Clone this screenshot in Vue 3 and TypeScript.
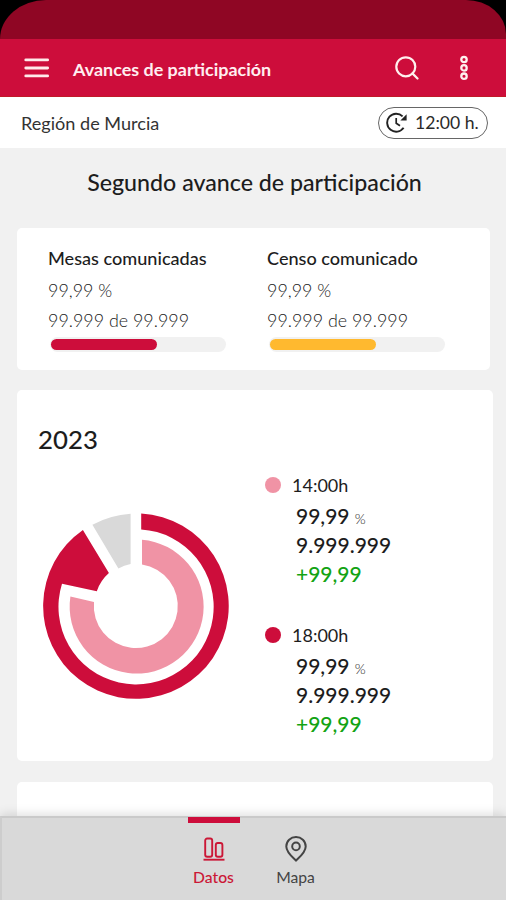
<script setup lang="ts">
interface Progress {
  title: string
  percent: string
  detail: string
  value: number
  tone: string
}

interface Turnout {
  hour: string
  percent: string
  votes: string
  delta: string
  tone: string
}

const progress: Progress[] = [
  { title: 'Mesas comunicadas', percent: '99,99 %', detail: '99.999 de 99.999', value: 61, tone: 'red' },
  { title: 'Censo comunicado', percent: '99,99 %', detail: '99.999 de 99.999', value: 61, tone: 'amber' },
]

const turnout: Turnout[] = [
  { hour: '14:00h', percent: '99,99', votes: '9.999.999', delta: '+99,99', tone: 'pink' },
  { hour: '18:00h', percent: '99,99', votes: '9.999.999', delta: '+99,99', tone: 'red' },
]
</script>

<template>
  <div class="screen">
    <div class="status"><div class="status-fill"></div></div>
    <header class="bar">
      <svg class="menu" width="26" height="20" viewBox="0 0 26 20">
        <path d="M1.8 1.9H23.6M1.8 10H23.6M1.8 17.9H23.6" stroke="#ffeaea" stroke-width="2.9" stroke-linecap="round" />
      </svg>
      <h1>Avances de participación</h1>
      <svg class="search" width="24" height="24" viewBox="0 0 24 24" fill="none" stroke="#fff0ee" stroke-width="2.2">
        <circle cx="10.8" cy="10.8" r="9.5" />
        <path d="M17.4 17.4L22.5 22.5" stroke-linecap="round" />
      </svg>
      <svg class="more" width="10" height="26" viewBox="0 0 10 26" fill="none" stroke="#fff0ee" stroke-width="2.3">
        <circle cx="5" cy="4.5" r="2.7" />
        <circle cx="5" cy="12.9" r="2.7" />
        <circle cx="5" cy="21.2" r="2.7" />
      </svg>
    </header>
    <div class="place">
      <span class="region">Región de Murcia</span>
      <div class="pill">
        <svg width="22" height="22" viewBox="0 0 22 22" fill="none" stroke="#222" stroke-width="1.9">
          <path d="M17.6 15.8A9 9 0 1 1 16.6 4.4" />
          <path d="M10.2 6V11.2L14 13.8" stroke-width="1.7" />
          <path d="M20.6 2.2V8.4H14.4Z" fill="#222" stroke="none" />
        </svg>
        <span>12:00 h.</span>
      </div>
    </div>
    <main>
      <h2>Segundo avance de participación</h2>
      <section class="card summary">
        <div v-for="p in progress" :key="p.title" class="item">
          <h3>{{ p.title }}</h3>
          <p>{{ p.percent }}</p>
          <p>{{ p.detail }}</p>
          <div class="track"><div class="fill" :class="p.tone" :style="{ width: p.value + '%' }"></div></div>
        </div>
      </section>
      <section class="card year">
        <h4>2023</h4>
        <div class="year-body">
          <svg class="donut" width="188" height="188" viewBox="42 512 188 188">
            <path class="red" d="M141.2 513.4A92.8 92.8 0 1 1 82.9 529.9L108.9 573.1A42.5 42.5 0 0 0 96.8 591.2L62 583.7A77.6 77.6 0 1 0 141.2 529.4Z" />
            <path class="pink" d="M142 539.8A67 67 0 1 1 70.4 596.5L94 602A42 42 0 1 0 142 564.5Z" />
            <path class="gray" d="M130.6 513.8V564A42.5 42.5 0 0 0 118.4 568.4L92.4 524.8A93 93 0 0 1 130.6 513.8Z" />
          </svg>
          <div class="legend">
            <div v-for="t in turnout" :key="t.hour" class="entry">
              <div class="hour"><i class="dot" :class="t.tone"></i><span>{{ t.hour }}</span></div>
              <p>{{ t.percent }} <small>%</small></p>
              <p>{{ t.votes }}</p>
              <p class="delta">{{ t.delta }}</p>
            </div>
          </div>
        </div>
      </section>
      <section class="card next"></section>
    </main>
    <nav>
      <a class="tab active">
        <svg width="22" height="24" viewBox="0 0 22 24" fill="none" stroke="#cb1736" stroke-width="1.9">
          <rect x="2.2" y="1.5" width="7" height="18.3" rx="2" />
          <rect x="12.8" y="6" width="6.6" height="13.8" rx="2" />
          <path d="M.5 22.7H21.5" />
        </svg>
        <span>Datos</span>
      </a>
      <a class="tab">
        <svg width="22" height="26" viewBox="0 0 22 26" fill="none" stroke="#444" stroke-width="2">
          <path d="M11 24.6C7 20.8 1.3 16.2 1.3 10.5A9.7 9.5 0 0 1 20.7 10.5C20.7 16.2 15 20.8 11 24.6Z" />
          <circle cx="11" cy="10.4" r="3.8" />
        </svg>
        <span>Mapa</span>
      </a>
    </nav>
  </div>
</template>

<style>
body {
  margin: 0;
  overflow: hidden;
}
</style>

<style scoped>
.screen {
  width: 506px;
  height: 900px;
  display: flex;
  flex-direction: column;
  overflow: hidden;
  background: #f1f1f1;
  color: #1d1d1d;
  font-family: Lato, sans-serif;
}
h1, h2, h3, h4, p {
  margin: 0;
  font-weight: 400;
  white-space: nowrap;
}
svg {
  display: block;
  flex: none;
}
.status {
  height: 39px;
  flex: none;
  background: #000;
}
.status-fill {
  height: 100%;
  background: #8f0624;
  border-radius: 46px 40px 0 0 / 39px 34px 0 0;
}
.bar {
  height: 58px;
  flex: none;
  display: flex;
  align-items: center;
  background: #cd0d3b;
  box-sizing: border-box;
  border-bottom: 1px solid #c01a28;
  padding: 0 37px 0 24px;
}
h1 {
  margin: 2px 0 0 23px;
  color: #ffeef0;
  font-size: 17.95px;
  font-weight: 700;
}
.search {
  margin-left: auto;
}
.more {
  margin-left: 40px;
}
.place {
  height: 51px;
  flex: none;
  display: flex;
  align-items: center;
  justify-content: space-between;
  background: #fff;
  padding: 0 18px 0 21px;
}
.region {
  font-size: 18.1px;
  color: #333;
}
.pill {
  width: 110px;
  height: 32px;
  box-sizing: border-box;
  border: 1px solid #666;
  border-radius: 16px;
  display: flex;
  align-items: center;
  gap: 7px;
  padding-left: 7px;
  font-size: 17.6px;
  color: #2a2a2a;
  white-space: nowrap;
}
main {
  flex: 1;
  min-height: 0;
  overflow: hidden;
  padding-left: 16.5px;
}
h2 {
  height: 79.5px;
  line-height: 69px;
  width: 476px;
  text-align: center;
  font-size: 23.2px;
  font-weight: 500;
}
.card {
  background: #fff;
  border-radius: 5px;
  box-sizing: border-box;
  width: 476px;
}
.summary {
  width: 473.5px;
  height: 142px;
  margin-bottom: 20.5px;
  padding: 15px 0 0 31.5px;
  display: grid;
  grid-template-columns: 219px 219px;
  grid-template-rows: auto;
  align-content: start;
}
h3 {
  font-size: 18.1px;
  line-height: 30px;
  font-weight: 500;
  margin-bottom: 2px;
}
.item p {
  font-size: 17.9px;
  line-height: 30px;
  font-weight: 300;
  color: #222;
}
.track {
  margin: 2px 0 0 1.5px;
  padding: 2px 1.5px;
  box-sizing: border-box;
  width: 176px;
  height: 15px;
  border-radius: 8px;
  background: #f1f1f1;
}
.fill {
  height: 11px;
  border-radius: 6px;
}
.red {
  background: #cd0d3b;
  fill: #cd0d3b;
}
.amber {
  background: #ffb92f;
}
.pink {
  background: #f093a5;
  fill: #f093a5;
}
.donut path {
  background: none;
}
.gray {
  fill: #d9d9d9;
}
.year {
  height: 371px;
  padding: 31px 0 0 21.5px;
  margin-bottom: 21px;
}
h4 {
  font-size: 25.8px;
  line-height: 36px;
  font-weight: 500;
}
.year-body {
  display: flex;
}
.donut {
  margin: 55px 0 0 4px;
}
.legend {
  margin: 12px 0 0 35px;
}
.entry {
  height: 149.5px;
}
.hour {
  display: flex;
  align-items: center;
  height: 32px;
  font-size: 18px;
}
.dot {
  width: 16px;
  height: 16px;
  border-radius: 50%;
  margin-right: 11px;
}
.entry p {
  padding-left: 31px;
  font-size: 21px;
  line-height: 29px;
  height: 29px;
  font-weight: 500;
}
.entry small {
  font-size: 14px;
  font-weight: 300;
}
.entry .delta {
  color: #13a313;
}
.next {
  height: 80px;
}
nav {
  position: relative;
  height: 84px;
  flex: none;
  box-sizing: border-box;
  border-top: 2px solid #cacaca;
  border-left: 2px solid #cdcdcd;
  background: #d9d9d9;
  box-shadow: 0 -2px 10px rgba(0, 0, 0, 0.13);
  display: flex;
  padding-left: 185.5px;
  gap: 30px;
}
.tab {
  width: 52px;
  display: flex;
  flex-direction: column;
  align-items: center;
  margin-top: -1.5px;
  border-top: 6px solid transparent;
  box-sizing: border-box;
  padding-top: 13.5px;
  font-size: 15.7px;
  color: #444;
}
.tab svg {
  height: 26px;
}
.tab span {
  line-height: 20px;
  margin-top: 5px;
}
.active {
  border-top-color: #cd0d3b;
  color: #cb1736;
  font-weight: 500;
}
</style>
